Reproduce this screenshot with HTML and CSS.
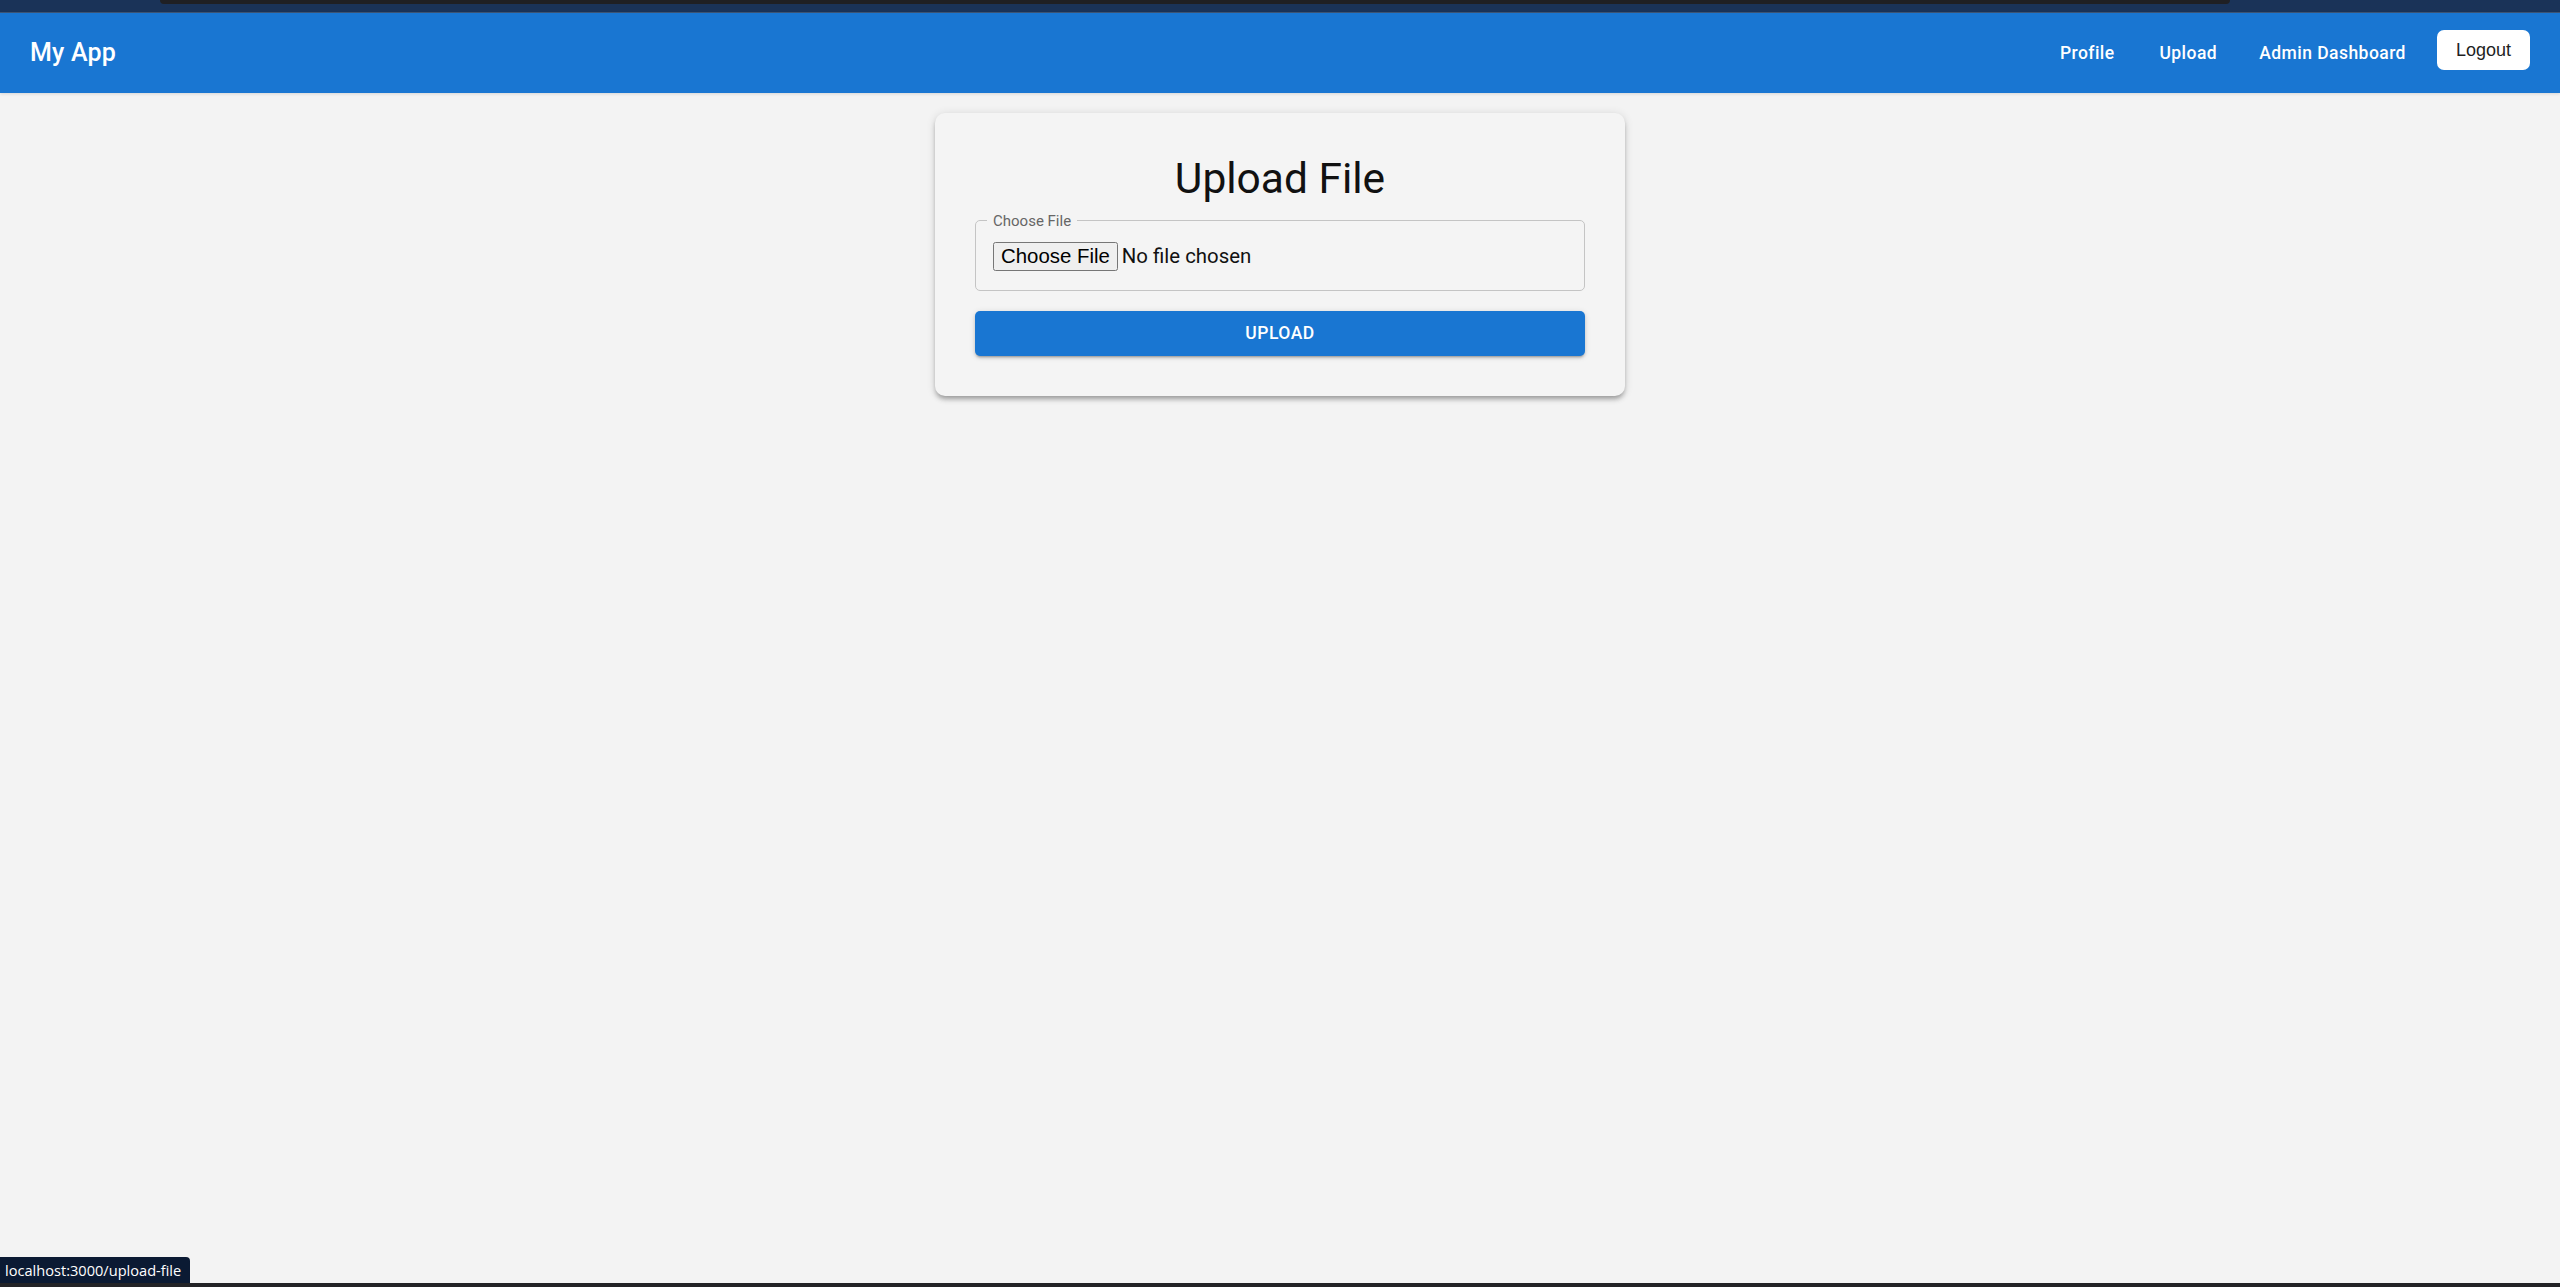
FILE: index.html
```html
<!DOCTYPE html>
<html lang="en">
<head>
<meta charset="utf-8">
<title>My App</title>
<link rel="stylesheet" href="styles.css">
</head>
<body>
<div class="chrome-strip"><div class="chrome-tab"></div></div>
<header class="appbar">
  <div class="toolbar">
    <div class="brand">My App</div>
    <nav class="nav">
      <a class="nav-btn" href="#">Profile</a>
      <a class="nav-btn" href="#">Upload</a>
      <a class="nav-btn" href="#">Admin Dashboard</a>
      <button class="logout" type="button">Logout</button>
    </nav>
  </div>
</header>
<main class="container">
  <section class="card">
    <h1 class="title">Upload File</h1>
    <form class="form">
      <fieldset class="outline">
        <legend class="legend">Choose File</legend>
        <input class="file" type="file">
      </fieldset>
      <button class="upload-btn" type="button">Upload</button>
    </form>
  </section>
</main>
<div class="status">localhost:3000/upload-file</div>
<div class="bottom-edge"></div>
</body>
</html>
```

FILE: styles.css
```css
html, body {
  margin: 0;
  padding: 0;
}
body {
  background: #f3f3f3;
  font-family: Roboto, "Liberation Sans", Arial, sans-serif;
  min-height: 1287px;
}
.chrome-strip {
  height: 12px;
  background: #1a3358;
  border-bottom: 1px solid #3e5677;
  display: flex;
}
.chrome-tab {
  margin-left: 160px;
  width: 2070px;
  height: 4px;
  background: #1f2024;
  border-radius: 0 0 8px 8px;
}
.appbar {
  background: #1976d2;
  color: #fff;
  box-shadow: 0 1px 3px rgba(0,0,0,0.12);
  position: relative;
  z-index: 1;
}
.toolbar {
  height: 80px;
  padding: 0 30px;
  display: flex;
  align-items: center;
  justify-content: space-between;
}
.brand {
  font-size: 25px;
  font-weight: 500;
  line-height: 40px;
  letter-spacing: 0.2px;
}
.nav {
  display: flex;
  align-items: center;
  gap: 21px;
}
.nav-btn {
  color: #fff;
  text-decoration: none;
  font-size: 17.5px;
  font-weight: 500;
  line-height: 30.6px;
  padding: 7.5px 10px;
  min-width: 80px;
  box-sizing: border-box;
  text-align: center;
  letter-spacing: 0.45px;
}
.logout {
  background: #fff;
  color: #1f1f1f;
  border: none;
  border-radius: 7px;
  height: 40px;
  padding: 0 19px;
  font-family: "Liberation Sans", Arial, sans-serif;
  font-size: 18px;
  margin-bottom: 6px;
}
.container {
  max-width: 690px;
  margin: 0 auto;
  padding: 20px 30px 0;
}
.card {
  background: #f4f4f4;
  border-radius: 10px;
  padding: 40px;
  box-shadow: 0 4px 4px -2px rgba(0,0,0,0.2), 0 4px 5px 0 rgba(0,0,0,0.14), 0 1px 10px 0 rgba(0,0,0,0.12);
}
.title {
  margin: 0;
  text-align: center;
  font-size: 42.5px;
  font-weight: 400;
  line-height: 52.5px;
  color: #111;
}
.form {
  display: flex;
  flex-direction: column;
}
.outline {
  margin: 8px 0 0;
  border: 1px solid #c4c4c4;
  border-radius: 5px;
  padding: 14px 11px 19px;
  min-width: 0;
}
.legend {
  padding: 0 6px;
  font-size: 15px;
  line-height: 14px;
  color: #666;
}
.file {
  margin-left: 6px;
  font-family: Roboto, "Liberation Sans", Arial, sans-serif;
  font-size: 20.4px;
  color: #111;
}
.upload-btn {
  margin-top: 20px;
  background: #1976d2;
  color: #fff;
  border: none;
  border-radius: 5px;
  font-family: Roboto, "Liberation Sans", Arial, sans-serif;
  font-size: 17.5px;
  font-weight: 500;
  text-transform: uppercase;
  letter-spacing: 0.5px;
  line-height: 30.6px;
  padding: 7.5px 20px;
  box-shadow: 0 3px 2px -2px rgba(0,0,0,0.2), 0 2px 3px 0 rgba(0,0,0,0.14), 0 1px 6px 0 rgba(0,0,0,0.12);
}
.status {
  position: fixed;
  left: 0;
  bottom: 4px;
  height: 26px;
  line-height: 26px;
  padding: 0 9px 0 5px;
  background: #0b1a33;
  color: #fff;
  font-family: "Open Sans", "Noto Sans", sans-serif;
  font-size: 14.6px;
  border-top-right-radius: 4px;
}
.bottom-edge {
  position: fixed;
  left: 0;
  right: 0;
  bottom: 0;
  height: 4px;
  background: #232326;
}
```
